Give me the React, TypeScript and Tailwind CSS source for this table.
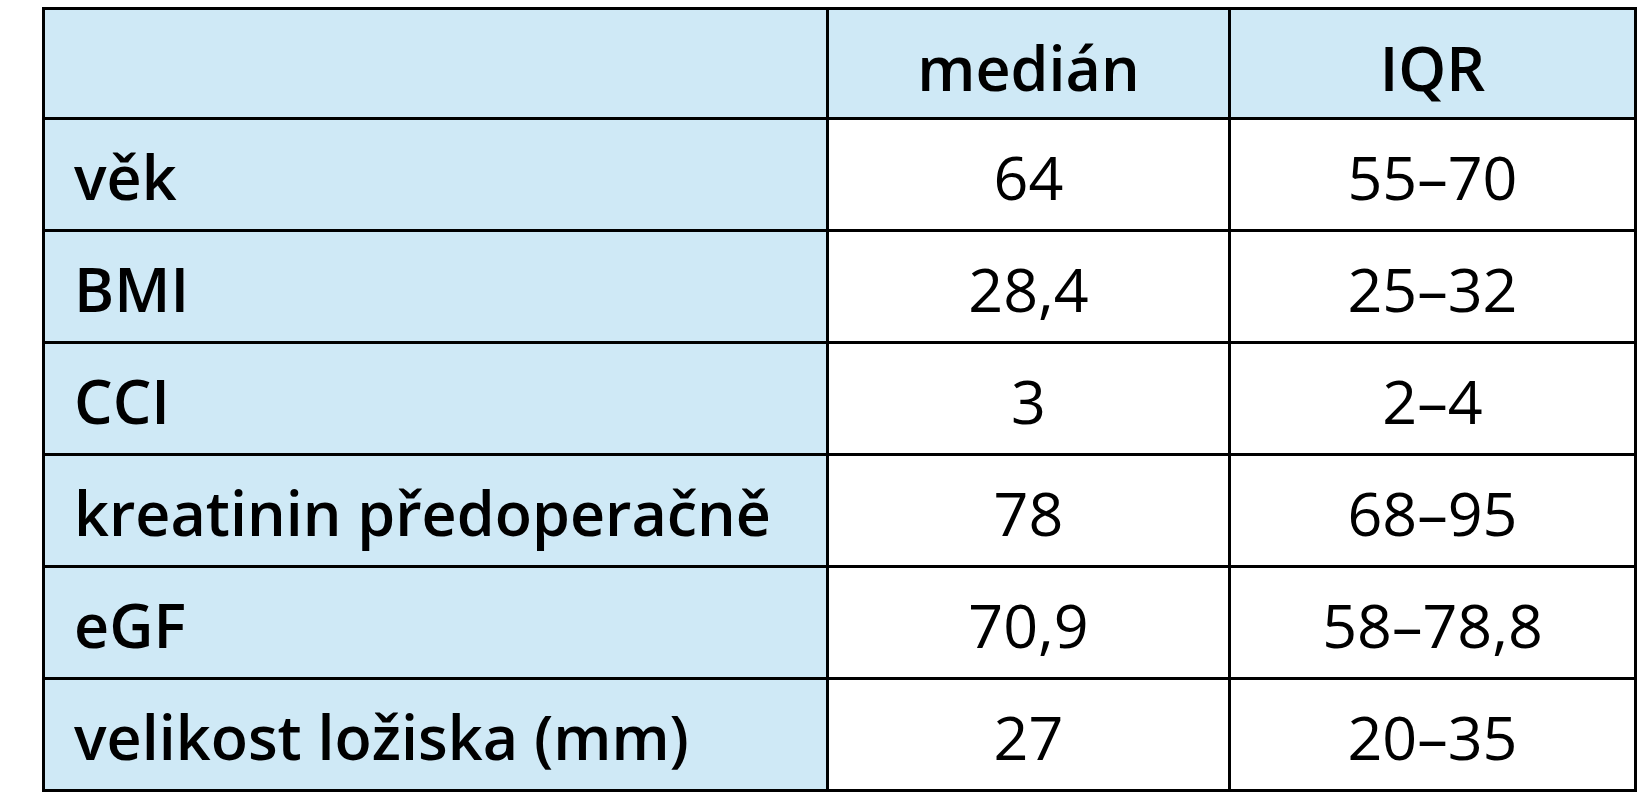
import React from "react";

const rows: [string, string, string][] = [
  ["věk", "64", "55–70"],
  ["BMI", "28,4", "25–32"],
  ["CCI", "3", "2–4"],
  ["kreatinin předoperačně", "78", "68–95"],
  ["eGF", "70,9", "58–78,8"],
  ["velikost ložiska (mm)", "27", "20–35"],
];

export default function App() {
  return (
    <div className="w-[1647px] h-[800px] bg-white pl-[42px] pt-[7px]" style={{ fontFamily: '"Open Sans", "Noto Sans", sans-serif' }}>
      <div className="inline-grid grid-cols-[781px_399px_403px] grid-rows-[107px_repeat(6,109px)] gap-[3px] p-[3px] bg-black text-black text-[61px] leading-none">
        <div className="bg-[#cfe9f6]" />
        <div className="bg-[#cfe9f6] flex items-center justify-center font-semibold pt-[8px]">medián</div>
        <div className="bg-[#cfe9f6] flex items-center justify-center font-semibold pt-[8px]">IQR</div>
        {rows.map(([a, b, c]) => (
          <React.Fragment key={a}>
            <div className="bg-[#cfe9f6] flex items-center pl-[29px] font-semibold pt-[4px]">{a}</div>
            <div className="bg-white flex items-center justify-center font-normal pt-[4px]">{b}</div>
            <div className="bg-white flex items-center justify-center font-normal pt-[4px]">{c}</div>
          </React.Fragment>
        ))}
      </div>
    </div>
  );
}
